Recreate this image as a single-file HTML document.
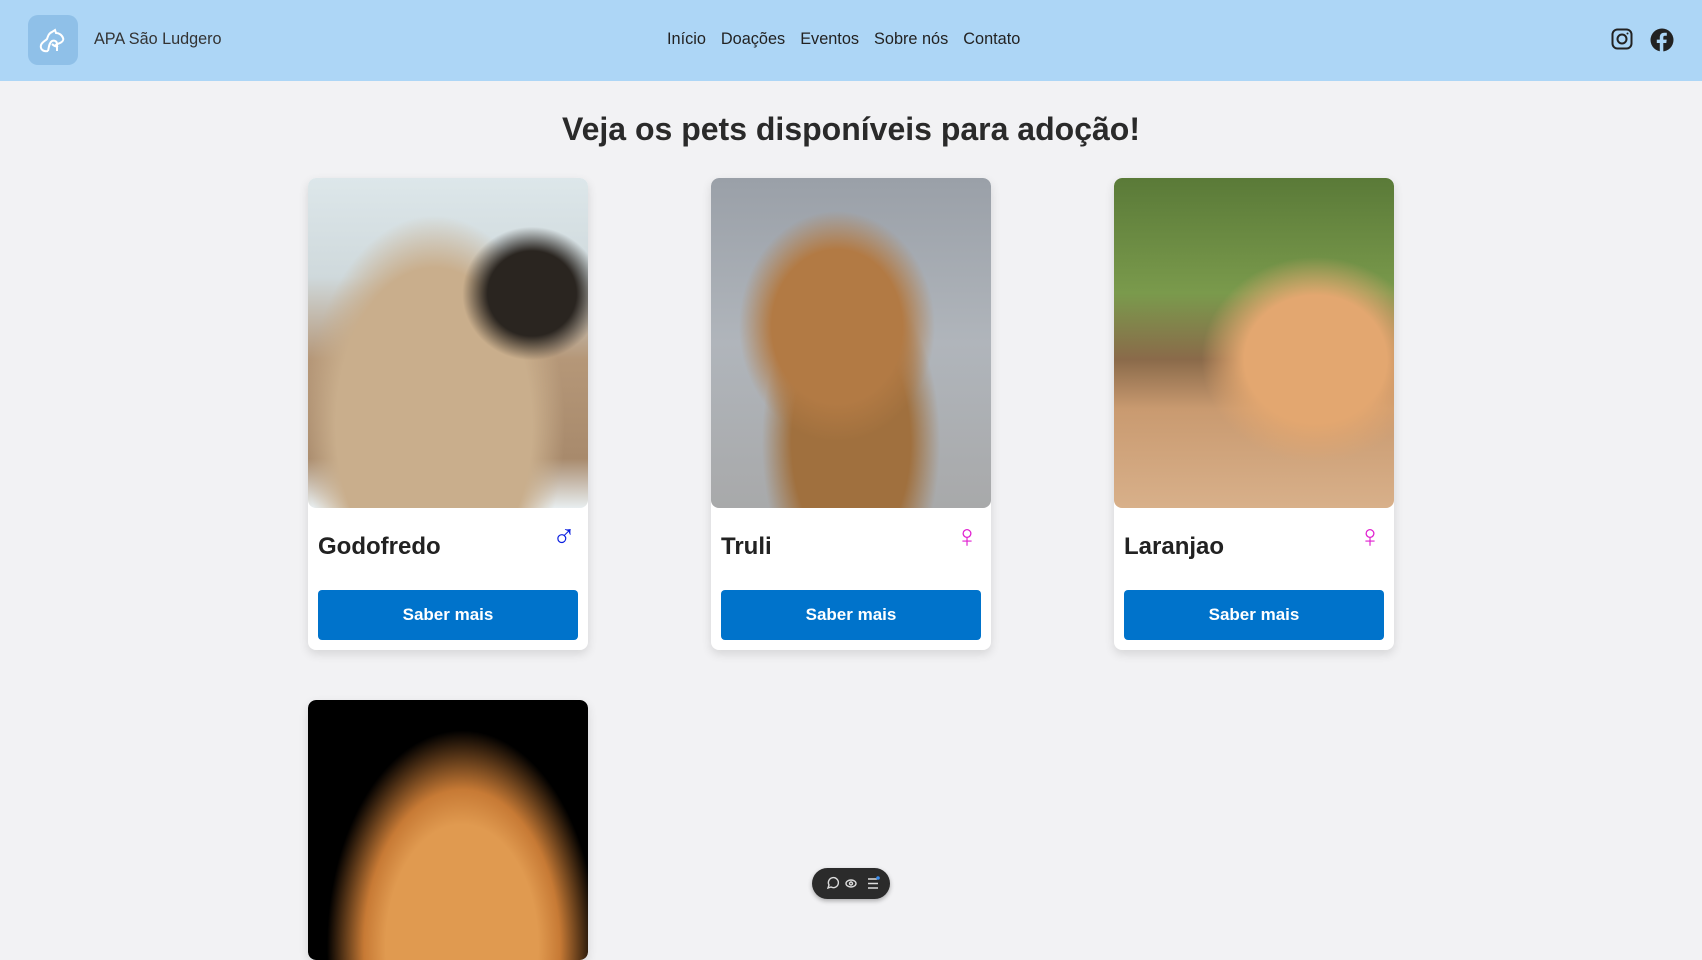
<!DOCTYPE html>
<html><head><meta charset="utf-8"><style>
*{box-sizing:border-box;margin:0;padding:0}
body{width:1702px;height:929px;overflow:hidden;background:#f2f2f4;font-family:"Liberation Sans",Arial,sans-serif;color:#222;position:relative}
header{position:absolute;left:0;top:0;width:1702px;height:81px;background:#add6f6}
.logo{position:absolute;left:28px;top:15px;width:50px;height:50px;border-radius:10px;background:#8fc0e8}
.brand{position:absolute;left:94px;top:30px;font-size:16.2px;color:#333}
nav{position:absolute;left:667px;top:30px;font-size:16.3px;color:#222}
nav span{margin-right:15px}
h1{position:absolute;top:111px;left:0;width:1702px;text-align:center;font-size:32px;font-weight:bold;color:#2a2a2a}
.card{position:absolute;width:280px;height:472px;background:#fff;border-radius:8px;box-shadow:0 4px 10px rgba(0,0,0,.12);overflow:hidden}
.img{height:330px;border-radius:8px 8px 8px 8px}
.name{position:absolute;left:10px;top:355px;font-size:24px;font-weight:bold;color:#222}
.sex{position:absolute;right:12px;top:342px;font-size:32px;line-height:1}
.btn{position:absolute;left:10px;top:412px;width:260px;height:50px;background:#0073cb;border-radius:4px;color:#fff;font-weight:bold;font-size:17px;text-align:center;line-height:50px}
.tb{position:absolute;left:812px;top:868px;width:78px;height:31px;border-radius:16px;background:#2b2b2b;box-shadow:0 2px 5px rgba(0,0,0,.3)}
</style></head><body>
<header>
<div class="logo"><svg width="50" height="50" viewBox="0 0 50 50" fill="none" stroke="#fff" stroke-width="2"><path d="M20 36c-5 1-8-2-7-6 1-3 4-4 6-6 1-3 2-6 5-7l3-2 1 3c3 0 6 2 7 5 1 2-1 4-3 5-2 1-4 1-5 3"/><path d="M20 36c1-4 1-8 4-10 2-1 5 0 5 3v7"/><path d="M24 29c2 2 4 3 6 2"/></svg></div>
<div class="brand">APA São Ludgero</div>
<nav><span>Início</span><span>Doações</span><span>Eventos</span><span>Sobre nós</span><span>Contato</span></nav>
<svg style="position:absolute;left:1611px;top:28px" width="22" height="22" viewBox="0 0 22 22" fill="none" stroke="#222" stroke-width="2"><rect x="1.5" y="1.5" width="19" height="19" rx="5"/><circle cx="11" cy="11" r="4.5"/><circle cx="16.5" cy="5.5" r="1" fill="#222" stroke="none"/></svg>
<svg style="position:absolute;left:1650px;top:28px" width="24" height="24" viewBox="0 0 24 24"><circle cx="12" cy="12" r="11.5" fill="#222"/><path d="M13.3 24V15h3l.4-3.4h-3.4V9.5c0-1 .3-1.7 1.7-1.7h1.8V4.8c-.3 0-1.4-.1-2.6-.1-2.6 0-4.4 1.6-4.4 4.5v2.4h-3V15h3v9z" fill="#add6f6"/></svg>
</header>
<h1>Veja os pets disponíveis para adoção!</h1>
<div class="card" style="left:308px;top:178px"><div class="img" style="background:radial-gradient(ellipse at 80% 35%,#2a2520 0 14%,transparent 22%),radial-gradient(ellipse at 45% 75%,#c9ae8c 0 45%,transparent 60%),linear-gradient(180deg,#dde7ea 0%,#cfd9dc 30%,#b59778 55%,#a88a6c 85%,#e8eef0 100%)"></div><div class="name">Godofredo</div><div class="sex" style="color:#0a1fe0">♂</div><div class="btn">Saber mais</div></div>
<div class="card" style="left:711px;top:178px"><div class="img" style="background:radial-gradient(ellipse at 45% 45%,#b27a44 0 30%,transparent 45%),radial-gradient(ellipse at 50% 80%,#a0703e 0 30%,transparent 45%),linear-gradient(180deg,#9aa0a8,#b0b5bb 50%,#a8a9aa)"></div><div class="name">Truli</div><div class="sex" style="color:#e020d0">♀</div><div class="btn">Saber mais</div></div>
<div class="card" style="left:1114px;top:178px"><div class="img" style="background:radial-gradient(ellipse at 72% 55%,#e3a770 0 25%,transparent 40%),linear-gradient(180deg,#5a7a38 0%,#7a9a4c 35%,#8a6a4a 55%,#c99a70 70%,#d8b08a 100%)"></div><div class="name">Laranjao</div><div class="sex" style="color:#e020d0">♀</div><div class="btn">Saber mais</div></div>
<div class="card" style="left:308px;top:700px;height:260px"><div class="img" style="height:260px;background:radial-gradient(ellipse at 55% 95%,#e09a50 0 35%,#c77a35 45%,#000 62%),#000"></div></div>
<div class="tb"><svg width="78" height="31" viewBox="0 0 78 31" fill="none" stroke="#ddd" stroke-width="1.4"><path d="M16 20l1-3a5 5 0 1 1 2 2z"/><ellipse cx="39" cy="15.5" rx="5" ry="3.5"/><circle cx="39" cy="15.5" r="1.5"/><path d="M56 11h9M56 15.5h10M56 20h10"/><circle cx="66" cy="10" r="1.8" fill="#3a8ef0" stroke="none"/></svg></div>
</body></html>
